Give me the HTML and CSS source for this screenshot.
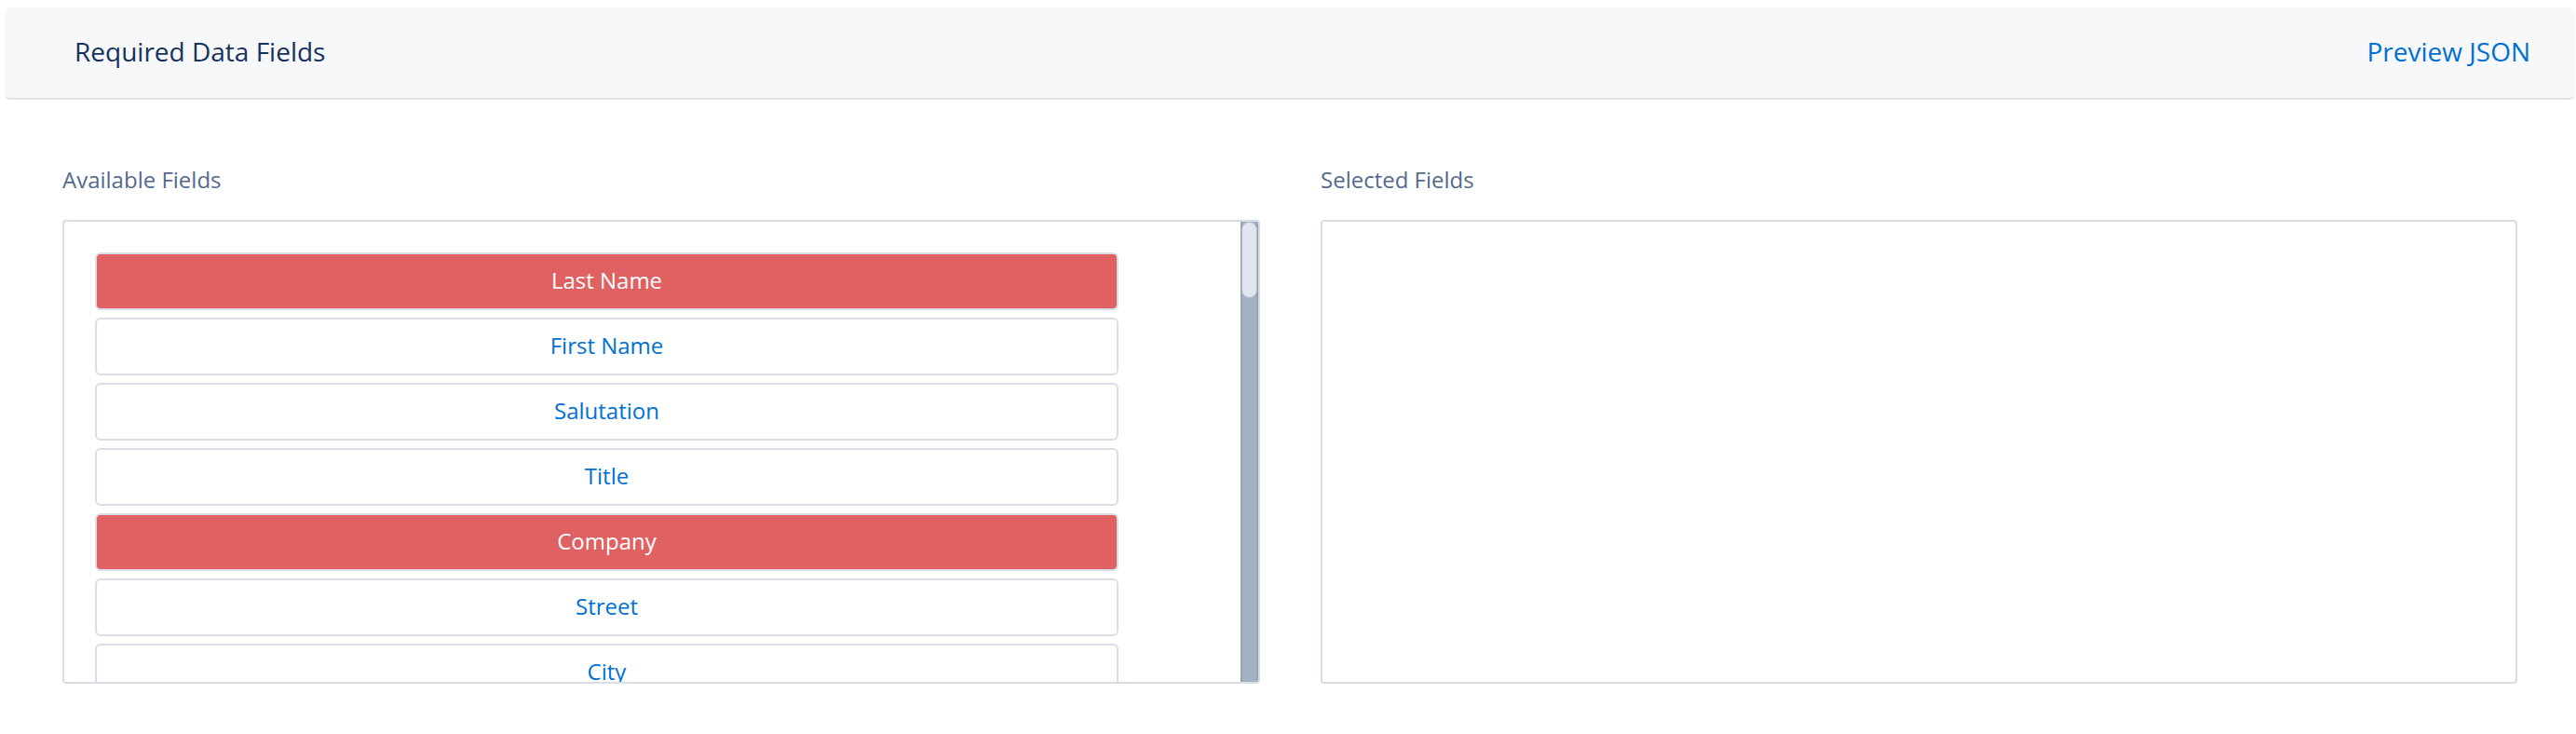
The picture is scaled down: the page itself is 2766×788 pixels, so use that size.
FILE: index.html
```html
<!DOCTYPE html>
<html lang="en">
<head>
<meta charset="utf-8">
<title>Required Data Fields</title>
<link rel="stylesheet" href="styles.css">
</head>
<body>
  <header class="header">
    <h1 class="header-title">Required Data Fields</h1>
    <a class="header-link" href="#">Preview JSON</a>
  </header>
  <main class="columns">
    <section class="column">
      <div class="label">Available Fields</div>
      <div class="box box-scroll">
        <ul class="field-list">
          <li class="field field-required">Last Name</li>
          <li class="field">First Name</li>
          <li class="field">Salutation</li>
          <li class="field">Title</li>
          <li class="field field-required">Company</li>
          <li class="field">Street</li>
          <li class="field">City</li>
        </ul>
        <div class="scrollbar"><div class="scrollbar-thumb"></div></div>
      </div>
    </section>
    <section class="column">
      <div class="label">Selected Fields</div>
      <div class="box"></div>
    </section>
  </main>
</body>
</html>
```

FILE: styles.css
```css
html, body {
  margin: 0;
  padding: 0;
  background: #ffffff;
}

body {
  font-family: "Open Sans", "Noto Sans", "Liberation Sans", sans-serif;
  color: #16325c;
}

.header {
  box-sizing: border-box;
  height: 99px;
  margin: 8px 1px 0 5px;
  padding: 0 48px 3px 75px;
  display: flex;
  align-items: center;
  justify-content: space-between;
  background: #f7f8fa;
  border-bottom: 2px solid #dde1e8;
  border-radius: 6px;
}

.header-title {
  margin: 0;
  font-size: 28px;
  font-weight: 400;
  color: #16325c;
}

.header-link {
  font-size: 28px;
  color: #0070d2;
  text-decoration: none;
}

.columns {
  display: grid;
  grid-template-columns: 1286px 1285px;
  column-gap: 65px;
  padding: 70px 63px 0 67px;
}

.column {
  display: flex;
  flex-direction: column;
}

.label {
  font-size: 24px;
  line-height: 32px;
  color: #54698d;
  margin-bottom: 27px;
}

.box {
  box-sizing: border-box;
  height: 498px;
  border: 2px solid #d8dde6;
  border-radius: 4px;
  background: #ffffff;
}

.box-scroll {
  display: flex;
  overflow: hidden;
}

.field-list {
  list-style: none;
  margin: 0;
  padding: 33px 0 0 33px;
  flex: 1;
  display: flex;
  flex-direction: column;
  gap: 8px;
  overflow: hidden;
}

.field {
  box-sizing: border-box;
  flex: 0 0 62px;
  width: 1099px;
  display: flex;
  align-items: center;
  justify-content: center;
  padding-bottom: 4px;
  border: 2px solid #d8dde6;
  border-radius: 6px;
  background: #ffffff;
  color: #0070d2;
  font-size: 24px;
}

.field-required {
  background: #e06161;
  color: #ffffff;
}

.scrollbar {
  box-sizing: border-box;
  flex: 0 0 19px;
  height: 100%;
  background: linear-gradient(to right, #8f9cae 0, #a5b2c3 3px, #a5b2c3 16px, #8f9cae 19px);
  padding: 0 1px;
}

.scrollbar-thumb {
  box-sizing: border-box;
  height: 82px;
  border-radius: 9px;
  background: #e0e5ee;
  border: 1px solid #b3bfce;
}
```
